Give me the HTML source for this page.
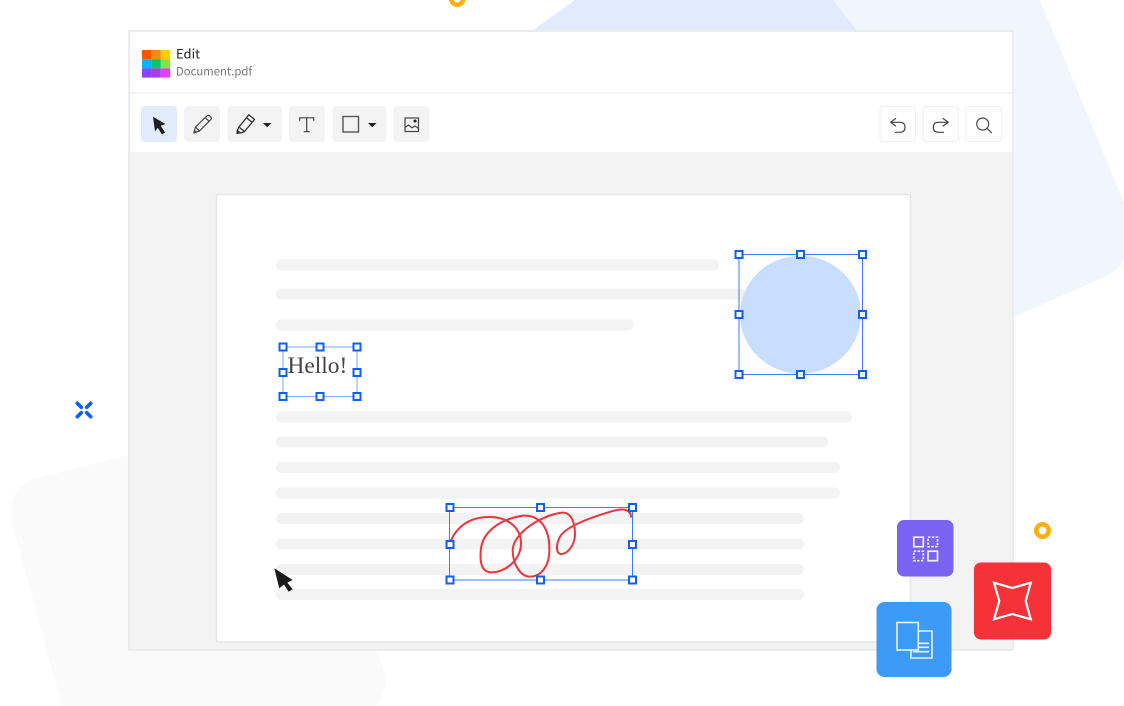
<!DOCTYPE html>
<html lang="en">
<head>
<meta charset="utf-8">
<title>Edit</title>
<style>
html,body{margin:0;padding:0;background:#fff;width:1124px;height:706px;overflow:hidden}
svg{display:block}
</style>
</head>
<body>
<svg xmlns="http://www.w3.org/2000/svg" width="1124" height="706" viewBox="0 0 1124 706">
  <!-- background shapes -->
  <path d="M832 0H1040L1124 203V258Q1122 268 1108 275L1010 319H820V0Z" fill="#f0f5fe"/>
  <path d="M530 32L575 0H833L858 32Z" fill="#e2ebfd"/>
  <path d="M128 455L37 478Q6 488 12 522L62 706H377Q388 690 384 672L377 651V440Z" fill="#fafafa"/>
  <circle cx="457.3" cy="-1.5" r="6.2" fill="none" stroke="#fdb00d" stroke-width="4.6"/>
  <circle cx="1042.5" cy="530.5" r="6.2" fill="none" stroke="#fdb00d" stroke-width="4.6"/>
  <g stroke="#0f5fff" stroke-width="3.6" stroke-linecap="round">
    <path d="M77.3 403.3L81.3 407.3M90.7 403.3L86.7 407.3M77.3 416.7L81.3 412.7M90.7 416.7L86.7 412.7"/>
  </g>

  <!-- window -->
  <rect x="129" y="31" width="884" height="619" fill="#f3f3f3" stroke="#ececec" stroke-width="2"/>
  <rect x="130" y="32" width="882" height="120" fill="#fff"/>
  <rect x="130" y="92" width="882" height="2" fill="#f4f4f4"/>

  <!-- logo -->
  <rect x="142" y="50" width="9.4" height="9.2" fill="#ff5500"/>
  <rect x="151.4" y="50" width="9.4" height="9.2" fill="#f58a1c"/>
  <rect x="160.8" y="50" width="9.4" height="9.2" fill="#ffcc00"/>
  <rect x="142" y="59.2" width="9.4" height="9.2" fill="#00b4ff"/>
  <rect x="151.4" y="59.2" width="9.4" height="9.2" fill="#00c767"/>
  <rect x="160.8" y="59.2" width="9.4" height="9.2" fill="#84e04f"/>
  <rect x="142" y="68.4" width="9.4" height="9.2" fill="#8a44ff"/>
  <rect x="151.4" y="68.4" width="9.4" height="9.2" fill="#a83ee0"/>
  <rect x="160.8" y="68.4" width="9.4" height="9.2" fill="#e63dff"/>

  <text x="176" y="58.500" font-family="'Noto Sans CJK SC','Liberation Sans',sans-serif" font-size="13" fill="#222">Edit</text>
  <text x="176" y="75.500" font-family="'Noto Sans CJK SC','Liberation Sans',sans-serif" font-size="11.300" fill="#777">Document.pdf</text>

  <!-- toolbar buttons -->
  <rect x="141" y="106" width="36" height="36" rx="4" fill="#e2ebfd"/>
  <rect x="184" y="106" width="36" height="36" rx="4" fill="#f3f3f3"/>
  <rect x="227.500" y="106" width="54.500" height="36" rx="4" fill="#f3f3f3"/>
  <rect x="289" y="106" width="36" height="36" rx="4" fill="#f3f3f3"/>
  <rect x="332.500" y="106" width="54" height="36" rx="4" fill="#f3f3f3"/>
  <rect x="393.500" y="106" width="36" height="36" rx="4" fill="#f3f3f3"/>

  <!-- select arrow -->
  <path d="M153 116.700L165.500 124L160.700 125.800L165 132.500L162 134.500L157.800 127.700L155 131.500Z" fill="#1f1f1f"/>
  <!-- pencil -->
  <g fill="none" stroke="#444" stroke-width="1.200" stroke-linejoin="round">
    <path d="M193.800 133L195.500 127L207.300 115.600Q208.300 114.800 209.300 115.600L211 117.300Q211.700 118.300 211 119.300L199.500 131Z"/>
    <path d="M195.500 127L199.500 131M205.300 117.600L209.200 121.500"/>
  </g>
  <path d="M193.800 133L194.700 130L196.700 132Z" fill="#444"/>
  <!-- highlighter -->
  <g fill="none" stroke="#333" stroke-width="1.300" stroke-linejoin="round">
    <path d="M239 127L248.800 114.800L254.500 119.500L244.500 131.500Z"/>
    <path d="M239 127L237.300 130.500L240.500 133L244.500 131.500"/>
    <path d="M246.500 117.800L252 122.300"/>
  </g>
  <path d="M236.500 130.500L240 133.500L236.500 134Z" fill="#222"/>
  <path d="M263 123H271.500L267.250 127.300Z" fill="#222"/>
  <!-- T -->
  <g fill="none" stroke="#444" stroke-width="1.200">
    <path d="M299.700 120.800V117.800H313.700V120.800M306.700 117.800V131.700M303.700 131.700H309.700"/>
  </g>
  <!-- rectangle -->
  <rect x="343" y="116.500" width="15.500" height="15.500" fill="none" stroke="#555" stroke-width="1.400"/>
  <path d="M368 123H376.500L372.250 127.300Z" fill="#222"/>
  <!-- image -->
  <g fill="none" stroke="#444" stroke-width="1.200">
    <rect x="405" y="118" width="13.500" height="13.500"/>
    <path d="M405 127.500L408.500 125L412 127.800L415 126L418.500 128.500"/>
  </g>
  <circle cx="415" cy="121" r="1.500" fill="#222"/>

  <!-- right buttons -->
  <g fill="#fff" stroke="#efefef" stroke-width="1.200">
    <rect x="880" y="106.500" width="35.500" height="35" rx="3"/>
    <rect x="923" y="106.500" width="35.500" height="35" rx="3"/>
    <rect x="966" y="106.500" width="35.500" height="35" rx="3"/>
  </g>
  <g fill="none" stroke="#444" stroke-width="1.200">
    <path d="M896 118.300L890.700 122.300L896 126.300M890.700 122.300H900Q905 122.300 905 127.300Q905 132.300 900 132.300H895"/>
    <path d="M942.700 118.300L948.300 122.300L942.700 126.300M948.300 122.300H938.300Q933.300 122.300 933.300 127.300Q933.300 132.300 938.300 132.300H944"/>
    <circle cx="982.700" cy="124" r="6"/>
    <path d="M987 128.300L991.700 132.800"/>
  </g>

  <!-- document page -->
  <rect x="216.500" y="194.500" width="694" height="447.500" fill="#fff" stroke="#e6e6e6" stroke-width="1.500"/>

  <!-- text lines -->
  <g fill="#f3f3f3">
    <rect x="276" y="259.500" width="443" height="11" rx="5.500"/>
    <rect x="276" y="288.500" width="470" height="11" rx="5.500"/>
    <rect x="276" y="319.500" width="358" height="11" rx="5.500"/>
    <rect x="276" y="411.500" width="576" height="11" rx="5.500"/>
    <rect x="276" y="436.500" width="552" height="11" rx="5.500"/>
    <rect x="276" y="462" width="564" height="11" rx="5.500"/>
    <rect x="276" y="487.500" width="564" height="11" rx="5.500"/>
    <rect x="276" y="513" width="528" height="11" rx="5.500"/>
    <rect x="276" y="538.500" width="528" height="11" rx="5.500"/>
    <rect x="276" y="564" width="528" height="11" rx="5.500"/>
    <rect x="276" y="589" width="528" height="11" rx="5.500"/>
  </g>

  <!-- circle selection -->
  <ellipse cx="800.500" cy="314.700" rx="60.500" ry="59" fill="#c9deff"/>
  <rect x="739" y="254.500" width="123.500" height="120" fill="none" stroke="#3d7bff" stroke-width="1"/>
  <g fill="#fff" stroke="#0f5fff" stroke-width="2">
    <rect x="735.500" y="251" width="7" height="7"/>
    <rect x="797" y="251" width="7" height="7"/>
    <rect x="859" y="251" width="7" height="7"/>
    <rect x="735.500" y="311" width="7" height="7"/>
    <rect x="859" y="311" width="7" height="7"/>
    <rect x="735.500" y="371" width="7" height="7"/>
    <rect x="797" y="371" width="7" height="7"/>
    <rect x="859" y="371" width="7" height="7"/>
  </g>

  <!-- Hello selection -->
  <rect x="283" y="347" width="74" height="49.500" fill="none" stroke="#8fb3ff" stroke-width="1.200"/>
  <text x="287.500" y="373" font-family="'Liberation Serif',serif" font-size="23.400" fill="#444">Hello!</text>
  <g fill="#fff" stroke="#0f5fff" stroke-width="2">
    <rect x="279.500" y="343.500" width="7" height="7"/>
    <rect x="316.500" y="343.500" width="7" height="7"/>
    <rect x="353.500" y="343.500" width="7" height="7"/>
    <rect x="279.500" y="369" width="7" height="7"/>
    <rect x="353.500" y="369" width="7" height="7"/>
    <rect x="279.500" y="393" width="7" height="7"/>
    <rect x="316.500" y="393" width="7" height="7"/>
    <rect x="353.500" y="393" width="7" height="7"/>
  </g>

  <!-- signature selection -->
  <rect x="449.500" y="507.500" width="183" height="72.500" fill="none" stroke="#3d7bff" stroke-width="1"/>
  <path transform="translate(440 495) scale(.3333)" d="M30 145C45 100 85 65 150 66C205 66 243 100 243 145C243 195 195 232 155 232C125 232 120 205 122 170C125 110 180 72 250 62C300 60 328 100 328 160C330 210 305 245 270 245C240 245 218 205 218 165C220 115 300 62 365 53C395 50 405 85 405 120C403 155 380 178 362 177C348 175 347 150 360 125C378 95 450 68 515 49C555 37 572 46 573 65" fill="none" stroke="#f2333b" stroke-width="6" stroke-linecap="round"/>
  <g fill="#fff" stroke="#0f5fff" stroke-width="2">
    <rect x="446.500" y="504" width="7" height="7"/>
    <rect x="537" y="504" width="7" height="7"/>
    <rect x="629" y="504" width="7" height="7"/>
    <rect x="446.500" y="541" width="7" height="7"/>
    <rect x="629" y="541" width="7" height="7"/>
    <rect x="446.500" y="576.500" width="7" height="7"/>
    <rect x="537" y="576.500" width="7" height="7"/>
    <rect x="629" y="576.500" width="7" height="7"/>
  </g>

  <!-- cursor -->
  <path d="M274.300 568.300L292.700 580L287.300 582.700L292.700 589.300L288.700 591.700L284 584.500L279.300 588.300Z" fill="#1a1a1a"/>

  <!-- purple tile -->
  <rect x="897" y="520" width="56.500" height="56.500" rx="7" fill="#7a63f1"/>
  <g fill="none" stroke="#f2efff" stroke-width="1.700">
    <rect x="913.800" y="537.200" width="9.500" height="9.500"/>
    <rect x="928" y="551.200" width="9.500" height="9.500"/>
    <rect x="928" y="537.200" width="9.500" height="9.500" stroke-dasharray="2.400 1.400"/>
    <rect x="913.800" y="551.200" width="9.500" height="9.500" stroke-dasharray="2.400 1.400"/>
  </g>

  <!-- red tile -->
  <rect x="974" y="562.500" width="77" height="77" rx="7" fill="#f53237"/>
  <path d="M994 582.700L1012.300 588L1030.700 582.700L1025.700 601L1030.700 619.300L1012.300 614L994 619.300L999.300 601Z" fill="none" stroke="#fff" stroke-width="2.200"/>

  <!-- blue tile -->
  <rect x="876.500" y="602" width="75" height="75" rx="8" fill="#3d9bf7"/>
  <g fill="none" stroke="#e8f3ff" stroke-width="1.600">
    <path d="M918.300 631H932V658H911V650"/>
    <rect x="897" y="622.500" width="21.300" height="27.500" fill="#3d9bf7"/>
    <path d="M918.800 643.300H929M918.800 647.300H929M913 651.700H929"/>
  </g>
</svg>
</body>
</html>
